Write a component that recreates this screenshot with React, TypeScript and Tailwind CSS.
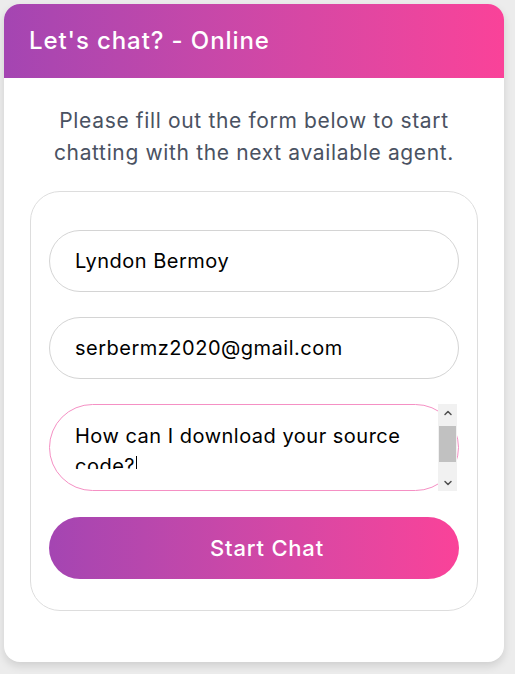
import { ChevronUp, ChevronDown } from "lucide-react"

const font = { fontFamily: "Inter, 'Noto Sans', sans-serif" }

export default function App() {
  return (
    <div className="min-h-screen bg-[#ececec] p-1" style={font}>
      <div className="w-[500px] overflow-hidden rounded-2xl bg-white shadow-[0_4px_8px_rgba(0,0,0,0.12)]">
        <div className="flex h-[74px] items-center bg-gradient-to-r from-[#a445b2] to-[#fa4299] px-[25px]">
          <h1 className="text-[24px] font-medium tracking-[0.9px] text-white">Let's chat? - Online</h1>
        </div>

        <div className="px-[20px] pb-[51px] pt-[27px]">
          <p className="mb-[22px] text-center text-[21px] leading-[32px] tracking-[0.65px] text-[#4a5262]">
            Please fill out the form below to start
            <br />
            chatting with the next available agent.
          </p>

          <div className="mx-[6px] flex flex-col gap-[25px] rounded-[30px] border border-[#dddddd] px-[18px] pb-[31px] pt-[38px]">
            <div className="flex h-[62px] items-center rounded-full border border-[#d4d4d4] px-[25px] text-[20px] tracking-[0.5px] text-black">
              Lyndon Bermoy
            </div>
            <div className="flex h-[62px] items-center rounded-full border border-[#d4d4d4] px-[25px] text-[20px] tracking-[0.5px] text-black">
              serbermz2020@gmail.com
            </div>
            <div className="relative h-[87px]">
              <div className="h-full rounded-full border border-[#f590c4]">
                <div className="h-[64px] overflow-hidden pl-[25px] pr-[30px] pt-[16px] text-[20px] leading-[30px] tracking-[0.5px] text-black">
                  How can I download your source code?
                  <span className="ml-px inline-block h-[22px] w-px bg-black align-[-5px]" />
                </div>
              </div>
              <div className="absolute right-[2px] top-0 flex h-full w-[19px] flex-col bg-[#f1f1f1]">
                <div className="flex h-[17px] items-center justify-center">
                  <ChevronUp className="h-3 w-3 text-[#505050]" strokeWidth={3} />
                </div>
                <div className="mx-[1px] mt-[5px] h-[36px] bg-[#c1c1c1]" />
                <div className="flex-1" />
                <div className="flex h-[17px] items-center justify-center">
                  <ChevronDown className="h-3 w-3 text-[#505050]" strokeWidth={3} />
                </div>
              </div>
            </div>
            <button className="mt-px flex h-[62px] items-center justify-center rounded-full bg-gradient-to-r from-[#a445b2] to-[#fa4299] pl-[26px] text-[22px] font-medium tracking-[0.8px] text-white">
              Start Chat
            </button>
          </div>
        </div>
      </div>
    </div>
  )
}
